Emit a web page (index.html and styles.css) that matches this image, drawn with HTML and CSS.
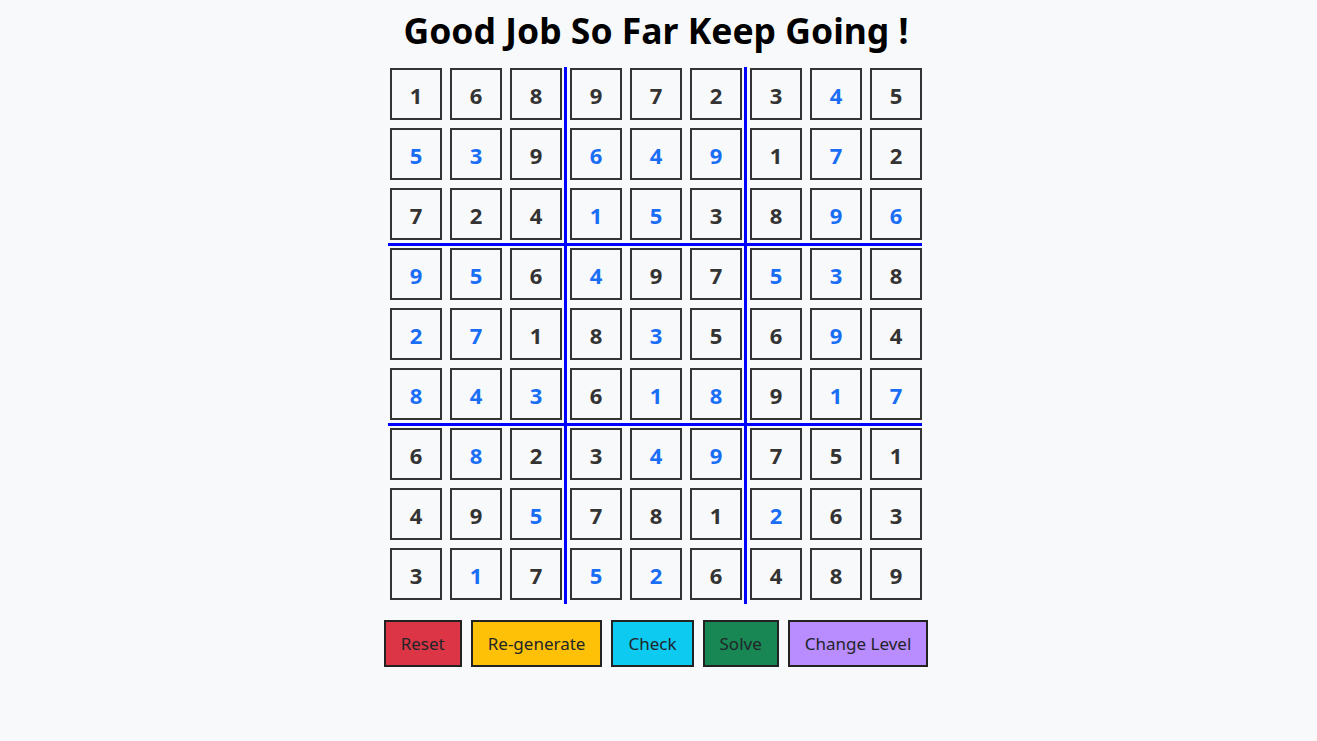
FILE: index.html
```html
<!DOCTYPE html>
<html lang="en">
<head>
<meta charset="utf-8">
<title>Sudoku</title>
<link rel="stylesheet" href="styles.css">
</head>
<body>
<main class="app">
  <h1 class="title">Good Job So Far Keep Going !</h1>
  <div class="board">
    <div class="cell">1</div><div class="cell">6</div><div class="cell">8</div><div class="cell">9</div><div class="cell">7</div><div class="cell">2</div><div class="cell">3</div><div class="cell user">4</div><div class="cell">5</div>
    <div class="cell user">5</div><div class="cell user">3</div><div class="cell">9</div><div class="cell user">6</div><div class="cell user">4</div><div class="cell user">9</div><div class="cell">1</div><div class="cell user">7</div><div class="cell">2</div>
    <div class="cell">7</div><div class="cell">2</div><div class="cell">4</div><div class="cell user">1</div><div class="cell user">5</div><div class="cell">3</div><div class="cell">8</div><div class="cell user">9</div><div class="cell user">6</div>
    <div class="cell user">9</div><div class="cell user">5</div><div class="cell">6</div><div class="cell user">4</div><div class="cell">9</div><div class="cell">7</div><div class="cell user">5</div><div class="cell user">3</div><div class="cell">8</div>
    <div class="cell user">2</div><div class="cell user">7</div><div class="cell">1</div><div class="cell">8</div><div class="cell user">3</div><div class="cell">5</div><div class="cell">6</div><div class="cell user">9</div><div class="cell">4</div>
    <div class="cell user">8</div><div class="cell user">4</div><div class="cell user">3</div><div class="cell">6</div><div class="cell user">1</div><div class="cell user">8</div><div class="cell">9</div><div class="cell user">1</div><div class="cell user">7</div>
    <div class="cell">6</div><div class="cell user">8</div><div class="cell">2</div><div class="cell">3</div><div class="cell user">4</div><div class="cell user">9</div><div class="cell">7</div><div class="cell">5</div><div class="cell">1</div>
    <div class="cell">4</div><div class="cell">9</div><div class="cell user">5</div><div class="cell">7</div><div class="cell">8</div><div class="cell">1</div><div class="cell user">2</div><div class="cell">6</div><div class="cell">3</div>
    <div class="cell">3</div><div class="cell user">1</div><div class="cell">7</div><div class="cell user">5</div><div class="cell user">2</div><div class="cell">6</div><div class="cell">4</div><div class="cell">8</div><div class="cell">9</div>
    <span class="vline vline-1"></span>
    <span class="vline vline-2"></span>
    <span class="hline hline-1"></span>
    <span class="hline hline-2"></span>
  </div>
  <div class="actions">
    <button class="btn btn-reset">Reset</button>
    <button class="btn btn-regen">Re-generate</button>
    <button class="btn btn-check">Check</button>
    <button class="btn btn-solve">Solve</button>
    <button class="btn btn-level">Change Level</button>
  </div>
</main>
</body>
</html>
```

FILE: styles.css
```css
html, body {
  margin: 0;
  padding: 0;
  background: #f8f9fa;
}

body {
  font-family: "Noto Sans", "Open Sans", sans-serif;
  color: #212529;
}

.app {
  display: flex;
  flex-direction: column;
  align-items: center;
  padding-top: 6px;
  padding-right: 5px;
}

.title {
  margin: 0 0 10px;
  font-size: 35.5px;
  font-weight: 700;
  line-height: 48px;
  color: #000;
}

.board {
  position: relative;
  display: grid;
  grid-template-columns: repeat(9, 60px);
  grid-auto-rows: 60px;
}

.cell {
  margin: 4px;
  width: 52px;
  height: 52px;
  box-sizing: border-box;
  border: 2px solid #333;
  background: #f8f9fa;
  display: flex;
  align-items: center;
  justify-content: center;
  padding-top: 2px;
  font-size: 22px;
  font-weight: 700;
  color: #333;
}

.cell.user {
  color: #1a6ef5;
}

.vline {
  position: absolute;
  top: 3px;
  bottom: 0;
  width: 3px;
  background: #0000ff;
}

.vline-1 { left: 178px; }
.vline-2 { left: 358px; }

.hline {
  position: absolute;
  left: 2px;
  right: 4px;
  height: 3px;
  background: #0000ff;
}

.hline-1 { top: 179px; }
.hline-2 { top: 359px; }

.actions {
  display: flex;
  gap: 9px;
  margin-top: 16px;
}

.btn {
  font-family: "Noto Sans", "Open Sans", sans-serif;
  font-size: 17px;
  color: #212529;
  height: 47px;
  padding: 0 15px;
  border: 2px solid #222;
  border-radius: 0;
}

.btn-reset { background: #dc3545; }
.btn-regen { background: #ffc107; }
.btn-check { background: #0dcaf0; }
.btn-solve { background: #198754; }
.btn-level { background: #b98cff; }
```
